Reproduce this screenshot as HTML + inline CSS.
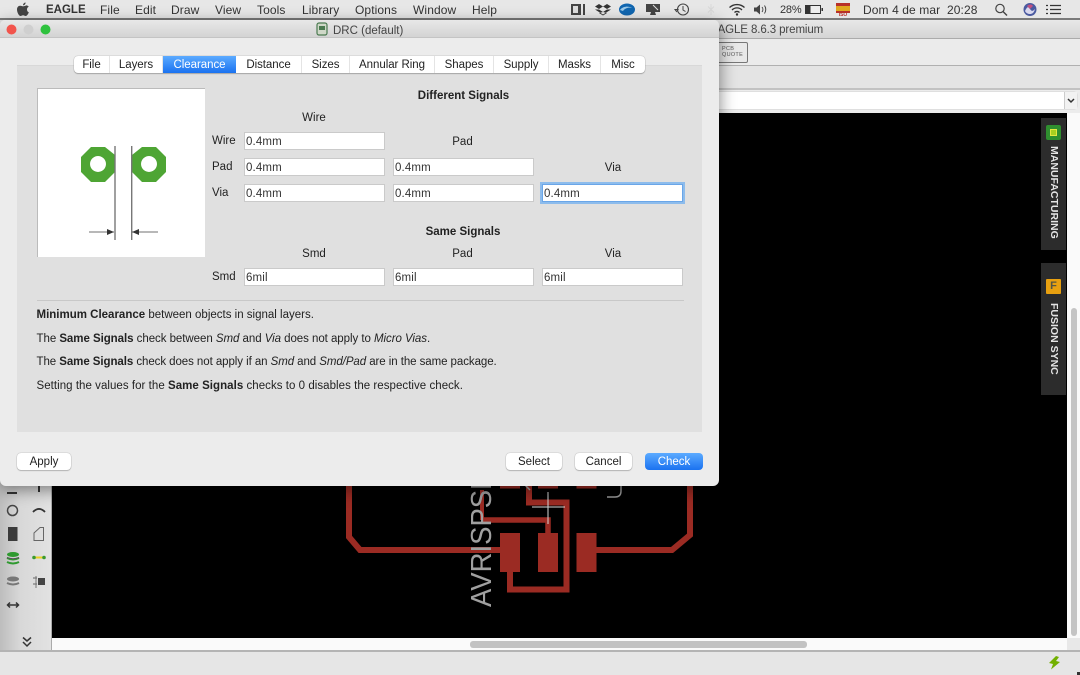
<!DOCTYPE html>
<html><head><meta charset="utf-8"><style>
html,body{margin:0;padding:0;background:#e6e6e6}
#p{position:relative;width:1080px;height:675px;overflow:hidden;font-family:"Liberation Sans",sans-serif;color:#222;background:#e6e6e6;filter:blur(.3px)}
#p div,#p svg{position:absolute}
.t{white-space:nowrap;font-size:11.5px;line-height:16px;height:16px;letter-spacing:0}
.m{font-size:12px;color:#333;top:3px;line-height:15px;height:15px;white-space:nowrap;letter-spacing:.1px}
.c{transform:translateX(-50%)}
.f{background:#fff;border:1px solid #cacaca;box-sizing:border-box;height:18px;font-size:11.5px;line-height:18px;padding-left:1px;letter-spacing:.15px;color:#333;white-space:nowrap}
.b{background:#fff;border-radius:4px;box-shadow:0 0 1px #888,0 1px 1px #bbb;height:17px;font-size:11.5px;line-height:19px;text-align:center;top:453px;color:#222}
.tab{top:56px;height:17px;line-height:19px;font-size:11.5px;text-align:center;border-right:1px solid #e4e4e4;box-sizing:border-box;letter-spacing:-.05px;color:#222}
</style></head><body><div id="p">

<!-- menu bar -->
<div style="left:0;top:0;width:1080px;height:19px;background:#e7e7e7"></div>
<div style="left:0;top:18px;width:1080px;height:2px;background:#7a7a7a"></div>
<svg style="left:16px;top:2px" width="14" height="15" viewBox="0 0 14 15"><path d="M10 3.6c-1.2 0-1.9.7-2.900.7S5.300 3.600 4 3.700C2.300 3.800 1 5.200 1 7.500c0 3 2 6.500 3.500 6.500 1 0 1.500-.7 2.600-.7s1.500.7 2.600.7c1.400 0 2.600-2.200 3.100-3.700-2.300-1-2.500-4.600-.1-5.600-.6-.9-1.600-1.400-2.700-1.300zM7 3.300C7 1.900 8.200.6 9.600.5c.1 1.500-1.200 2.900-2.600 2.800z" fill="#444"/></svg>
<div class="m" style="left:46px;font-weight:bold;font-size:11.500px;letter-spacing:0">EAGLE</div>
<div class="m" style="left:100px">File</div>
<div class="m" style="left:135px">Edit</div>
<div class="m" style="left:171px">Draw</div>
<div class="m" style="left:215px">View</div>
<div class="m" style="left:257px">Tools</div>
<div class="m" style="left:302px">Library</div>
<div class="m" style="left:355px">Options</div>
<div class="m" style="left:413px">Window</div>
<div class="m" style="left:472px">Help</div>

<svg style="left:560px;top:0" width="520" height="19" viewBox="560 0 520 19">
 <rect x="571" y="4" width="10" height="11" fill="#444"/><rect x="573" y="6" width="5" height="7" fill="#ddd"/><rect x="583" y="4" width="2" height="11" fill="#444"/>
 <path d="M599 4l4 2.500-4 2.500-4-2.500zM607 4l4 2.500-4 2.500-4-2.500zM599 9.500l4 2.500 4-2.500 4 0-8 5-8-5zM599 13l4 2.500 4-2.500-4-1z" fill="#333"/>
 <ellipse cx="627" cy="9.500" rx="8" ry="6" fill="#1166b0"/><path d="M620 10c3-4 9-4 12-2-3-1-7 0-9 3z" fill="#9cc9e8"/>
 <rect x="646" y="4" width="14" height="8" fill="#444"/><path d="M651 12h4l1 3h-6z" fill="#444"/><path d="M653 5l5 5" stroke="#ddd" stroke-width="1"/>
 <circle cx="683" cy="9.500" r="5.500" fill="none" stroke="#444" stroke-width="1.100"/><path d="M683 6v4l2.500 1.500M675 9.500h3l-1.500 2z" fill="none" stroke="#444" stroke-width="1"/>
 <path d="M711 4v11M708 6.500l6 6M708 12.500l6-6" stroke="#d8d8d8" stroke-width="1" fill="none"/>
 <path d="M729.500 7.500a11 11 0 0 1 15 0M732 10a7 7 0 0 1 10 0M734.500 12.500a3.500 3.500 0 0 1 5 0" fill="none" stroke="#333" stroke-width="1.300"/><circle cx="737" cy="14.500" r="1.200" fill="#333"/>
 <path d="M754 7.500h2.500l3.500-3v10l-3.500-3H754z" fill="#444"/><path d="M762 7a4 4 0 0 1 0 5M764.500 5.500a7 7 0 0 1 0 8" fill="none" stroke="#444" stroke-width="1"/>
 <rect x="805.500" y="5.500" width="15" height="8" fill="#eee" stroke="#333" stroke-width="1"/><rect x="806" y="6" width="4.500" height="7" fill="#333"/><rect x="821.500" y="8" width="1.500" height="3" fill="#333"/>
 <rect x="836" y="3" width="14" height="3" fill="#b8312a"/><rect x="836" y="6" width="14" height="5" fill="#e0a820"/><rect x="836" y="11" width="14" height="2" fill="#b8312a"/>
 <circle cx="1000" cy="8.500" r="4.200" fill="none" stroke="#444" stroke-width="1.200"/><path d="M1003 11.500l4 4" stroke="#444" stroke-width="1.400"/>
 <circle cx="1030" cy="9.500" r="6.500" fill="#4a5aa0"/><path d="M1025 11c2-4 3-5 5-2s3 2 5 0c-1 4-3 5-5 5s-4-1-5-3z" fill="#d8d8ee"/><path d="M1027 6c2-2 5-2 6 0l-3 3z" fill="#c05080"/>
 <path d="M1050 5.500h11M1050 9.500h11M1050 13.500h11" stroke="#333" stroke-width="1.300"/><path d="M1046 5.500h2M1046 9.500h2M1046 13.500h2" stroke="#333" stroke-width="1.300"/>
</svg>
<div class="m" style="left:780px;font-size:11px;letter-spacing:-.2px">28%</div>
<div style="left:836px;top:12px;width:14px;font-size:5px;line-height:6px;text-align:center;color:#b8312a;font-weight:bold">ISO</div>
<div class="m" style="left:863px">Dom 4 de mar</div>
<div class="m" style="left:947px">20:28</div>

<!-- main window -->
<div style="left:700px;top:20px;width:380px;height:18px;background:linear-gradient(#e8e8e8,#d4d4d4)"></div>
<div class="t" style="left:710px;top:22px;color:#444;letter-spacing:-.1px">EAGLE 8.6.3 premium</div>
<div style="left:700px;top:38px;width:380px;height:1px;background:#ababab"></div>
<div style="left:700px;top:39px;width:380px;height:26px;background:#ebebeb"></div>
<div style="left:700px;top:65px;width:380px;height:1px;background:#b0b0b0"></div>
<div style="left:700px;top:66px;width:380px;height:22px;background:#e4e4e4"></div>
<div style="left:700px;top:88px;width:380px;height:2px;background:#c2c2c2"></div>
<div style="left:700px;top:90px;width:380px;height:23px;background:#ececec"></div>
<div style="left:700px;top:92px;width:377px;height:17px;background:#fff;border-radius:3px;box-shadow:0 0 1px #999"></div>
<div style="left:1064px;top:92px;width:13px;height:17px;background:#f2f2f2;border-left:1px solid #ccc;box-sizing:border-box"></div>
<svg style="left:1066px;top:97px" width="10" height="7"><path d="M2 2l3 3 3-3" fill="none" stroke="#333" stroke-width="1.500"/></svg>
<div style="left:700px;top:42px;width:46px;height:19px;border:1px solid #777;border-radius:2px;background:#e8e8e8"></div>
<div style="left:722px;top:46px;font-size:5.500px;line-height:6px;color:#555;letter-spacing:.3px;white-space:nowrap">PCB<br>QUOTE</div>

<!-- canvas -->
<div style="left:0;top:113px;width:1067px;height:525px;background:#000"></div>
<div style="left:1067px;top:113px;width:13px;height:525px;background:#fafafa"></div>
<div style="left:1071px;top:308px;width:6px;height:328px;background:#c4c4c4;border-radius:3px"></div>
<div style="left:52px;top:638px;width:1015px;height:12px;background:#fafafa"></div>
<div style="left:1067px;top:638px;width:13px;height:12px;background:#e8e8e8"></div>
<div style="left:470px;top:641px;width:337px;height:7px;background:#c2c2c2;border-radius:3px"></div>
<div style="left:0;top:650px;width:1080px;height:2px;background:#b4b4b4"></div>
<div style="left:0;top:652px;width:1080px;height:23px;background:#e6e6e6"></div>
<svg style="left:1046px;top:654px" width="16" height="17" viewBox="1046 654 16 17"><path d="M1056 656L1049 663L1053 664L1051 669.500L1060 662L1056 661L1059 657Z" fill="#72b000"/></svg>
<div style="left:1077px;top:672px;width:3px;height:3px;background:#333"></div>

<!-- PCB -->
<svg style="left:52px;top:113px" width="1015" height="525" viewBox="52 113 1015 525">
 <g fill="none" stroke="#9b2b23" stroke-width="6">
  <path d="M349 480V537L360 550H505"/>
  <path d="M590 550H672L690 535V480"/>
  <path d="M510 570V589.500H566.500V502.500H529V480"/>
  <path d="M548 535V520H483" stroke-width="5.500"/>
  <path d="M482 520V490" stroke-width="4"/>
 </g>
 <g fill="#9b2b23">
  <rect x="500" y="533" width="20" height="39"/><rect x="538" y="533" width="20" height="39"/><rect x="576.500" y="533" width="20" height="39"/>
  <rect x="500" y="470" width="20" height="18.500"/><rect x="538" y="470" width="20" height="18.500"/><rect x="576.500" y="470" width="20" height="18.500"/>
 </g>
 <path d="M532 507H565M548 492V524" stroke="#d8d8d8" stroke-width="1" fill="none"/>
 <text transform="translate(491,607) rotate(-90)" font-family="Liberation Sans" font-size="29" fill="#a0a0a0" textLength="140" lengthAdjust="spacingAndGlyphs">AVRISPSM</text>
 <path d="M607 497H615Q621 497 621 491V470" fill="none" stroke="#999" stroke-width="1.500"/>
 <path d="M520 480L530 490" stroke="#aaa" stroke-width="1.500"/>
</svg>

<!-- right side panels -->
<div style="left:1041px;top:118px;width:25px;height:132px;background:#2c2c2c"></div>
<div style="left:1041px;top:263px;width:25px;height:132px;background:#2c2c2c"></div>
<div style="left:1046px;top:125px;width:15px;height:15px;background:#2f8f2f;border-radius:2px"></div>
<div style="left:1050px;top:129px;width:7px;height:7px;background:#a8d020;border:1px solid #e4e840;box-sizing:border-box"></div>
<div style="left:1046px;top:279px;width:15px;height:15px;background:#e8a010;border-radius:1px;font-size:11px;font-weight:bold;line-height:15px;text-align:center;color:#554"><span>F</span></div>
<div style="left:1047px;top:146px;width:13px;height:94px;writing-mode:vertical-rl;font-size:10.500px;line-height:13px;font-weight:bold;color:#e4e4e4;white-space:nowrap">MANUFACTURING</div>
<div style="left:1047px;top:303px;width:13px;height:72px;writing-mode:vertical-rl;font-size:10.500px;line-height:13px;font-weight:bold;color:#e4e4e4;white-space:nowrap">FUSION SYNC</div>

<!-- left toolbar -->
<div style="left:0;top:480px;width:52px;height:170px;background:linear-gradient(90deg,#bdbdbd,#d8d8d8 40%,#e2e2e2);border-right:1px solid #aaa;box-sizing:border-box"></div>
<svg style="left:0;top:480px" width="52" height="170" viewBox="0 480 52 170">
 <path d="M7 493H17" stroke="#333" stroke-width="2"/><path d="M39 486V492" stroke="#333" stroke-width="2"/>
 <circle cx="12.500" cy="510.500" r="5" fill="none" stroke="#444" stroke-width="1.500"/>
 <path d="M33 512Q39 506 45 512" fill="none" stroke="#333" stroke-width="1.800"/>
 <rect x="8" y="527" width="9.500" height="14" fill="#3a3a3a"/>
 <path d="M34 540.500V533L40 527.500H43.500V540.500Z" fill="none" stroke="#666" stroke-width="1"/>
 <ellipse cx="13" cy="554.500" rx="6" ry="2.500" fill="#2f9a30"/><path d="M7 558Q13 561 19 558M7 562Q13 565 19 562" fill="none" stroke="#2f9a30" stroke-width="2"/><path d="M7 557.500Q13 560 19 557.500" fill="none" stroke="#555" stroke-width="1"/>
 <path d="M33 557.500H45" stroke="#e8d020" stroke-width="2"/><circle cx="34" cy="557.500" r="1.800" fill="#3a9a30"/><circle cx="44" cy="557.500" r="1.800" fill="#3a9a30"/>
 <ellipse cx="13" cy="579" rx="6" ry="2.500" fill="#777"/><path d="M7 583Q13 586 19 583" fill="none" stroke="#777" stroke-width="2"/>
 <path d="M33 578H37M33 584H37" stroke="#666" stroke-width="1"/><rect x="38" y="578" width="7" height="7" fill="#444"/><path d="M36 576V588" stroke="#777" stroke-width="1"/>
 <path d="M8 605H18M10 602.500L7.500 605L10 607.500M16 602.500L18.500 605L16 607.500" fill="none" stroke="#333" stroke-width="1.500"/>
 <path d="M23 637.500L27 641L31 637.500M23 642L27 646L31 642" fill="none" stroke="#333" stroke-width="1.500"/>
</svg>

<!-- dialog -->
<div style="left:0;top:20px;width:719px;height:466px;background:#ececec;border-radius:5px 5px 6px 6px;box-shadow:1px 4px 16px rgba(0,0,0,.45)"></div>
<div style="left:0;top:20px;width:719px;height:18px;background:linear-gradient(#e8e8e8,#d3d3d3);border-radius:5px 5px 0 0;border-bottom:1px solid #c4c4c4;box-sizing:border-box"></div>
<svg style="left:0;top:20px" width="60" height="18"><circle cx="11.500" cy="9.500" r="5" fill="#f2544c"/><circle cx="28.500" cy="9.500" r="5" fill="#cfcfcf"/><circle cx="45.500" cy="9.500" r="5" fill="#2fc23e"/></svg>
<svg style="left:316px;top:22px" width="13" height="15"><rect x="1" y="1" width="10" height="12" rx="2" fill="#cfd8c8" stroke="#4a7a50" stroke-width="1.200"/><rect x="3" y="4" width="6" height="4" fill="#4a7a50"/></svg>
<div class="t" style="left:333px;top:23px;color:#444">DRC (default)</div>

<!-- panel -->
<div style="left:17px;top:65px;width:685px;height:367px;background:#e0e0e0;box-shadow:inset 0 1px 0 #d8d8d8"></div>
<div style="left:74px;top:56px;width:571px;height:17px;background:#fff;border-radius:4px;box-shadow:0 0 1px #888,0 1px 1px #aaa"></div>
<div class="tab" style="left:74px;width:36px">File</div>
<div class="tab" style="left:110px;width:53px">Layers</div>
<div class="tab" style="left:163px;width:73px;background:linear-gradient(#5cabff,#1a72f0);color:#fff;border:0">Clearance</div>
<div class="tab" style="left:236px;width:66px">Distance</div>
<div class="tab" style="left:302px;width:48px">Sizes</div>
<div class="tab" style="left:350px;width:85px">Annular Ring</div>
<div class="tab" style="left:435px;width:59px">Shapes</div>
<div class="tab" style="left:494px;width:55px">Supply</div>
<div class="tab" style="left:549px;width:52px">Masks</div>
<div class="tab" style="left:601px;width:44px;border:0">Misc</div>

<!-- image -->
<div style="left:37px;top:88px;width:168px;height:169px;background:#fff;box-shadow:inset 1px 1px 0 #bbb"></div>
<svg style="left:37px;top:88px" width="168" height="169" viewBox="37 88 168 169">
 <path fill-rule="evenodd" fill="#4ea534" d="M91 147H105L115 155V172L105 182H91L81 172V157ZM98 156a8 8 0 1 0 .01 0Z"/>
 <path fill-rule="evenodd" fill="#4ea534" d="M142 147H156L166 157V172L156 182H142L132 172V155ZM149 156a8 8 0 1 0 .01 0Z"/>
 <path d="M115 146V240M131.700 146V240" stroke="#777" stroke-width="1.400" fill="none"/>
 <path d="M89 232H114M132 232H158" stroke="#444" stroke-width=".8" fill="none"/>
 <path d="M114 232L107 229V235ZM132 232L139 229V235Z" fill="#333"/>
</svg>

<!-- labels -->
<div class="t c" style="left:463.500px;top:88px;font-weight:bold">Different Signals</div>
<div class="t c" style="left:314px;top:110px">Wire</div>
<div class="t c" style="left:462.500px;top:134px">Pad</div>
<div class="t c" style="left:613px;top:160px">Via</div>
<div class="t" style="left:212px;top:133px">Wire</div>
<div class="t" style="left:212px;top:159px">Pad</div>
<div class="t" style="left:212px;top:185px">Via</div>
<div class="f" style="left:244px;top:132px;width:141px">0.4mm</div>
<div class="f" style="left:244px;top:158px;width:141px">0.4mm</div>
<div class="f" style="left:393px;top:158px;width:141px">0.4mm</div>
<div class="f" style="left:244px;top:184px;width:141px">0.4mm</div>
<div class="f" style="left:393px;top:184px;width:141px">0.4mm</div>
<div class="f" style="left:542px;top:184px;width:141px;border:1px solid #6aa6e8;box-shadow:0 0 0 2px #8dbcec">0.4mm</div>
<div class="t c" style="left:463px;top:224px;font-weight:bold">Same Signals</div>
<div class="t c" style="left:314px;top:246px">Smd</div>
<div class="t c" style="left:462.500px;top:246px">Pad</div>
<div class="t c" style="left:613px;top:246px">Via</div>
<div class="t" style="left:212px;top:269px">Smd</div>
<div class="f" style="left:244px;top:268px;width:141px">6mil</div>
<div class="f" style="left:393px;top:268px;width:141px">6mil</div>
<div class="f" style="left:542px;top:268px;width:141px">6mil</div>

<div style="left:37px;top:300px;width:647px;height:1px;background:#c8c8c8"></div>
<div class="t" style="left:36.500px;top:307px"><b>Minimum Clearance</b> between objects in signal layers.</div>
<div class="t" style="left:36.500px;top:331px;letter-spacing:-.05px">The <b>Same Signals</b> check between <i>Smd</i> and <i>Via</i> does not apply to <i>Micro Vias</i>.</div>
<div class="t" style="left:36.500px;top:354px;letter-spacing:-.07px">The <b>Same Signals</b> check does not apply if an <i>Smd</i> and <i>Smd/Pad</i> are in the same package.</div>
<div class="t" style="left:36.500px;top:378px;letter-spacing:.04px">Setting the values for the <b>Same Signals</b> checks to 0 disables the respective check.</div>

<!-- buttons -->
<div class="b" style="left:17px;width:54px">Apply</div>
<div class="b" style="left:506px;width:56px">Select</div>
<div class="b" style="left:575px;width:57px">Cancel</div>
<div class="b" style="left:645px;width:58px;background:linear-gradient(#5cabff,#1a72f0);color:#fff;box-shadow:none">Check</div>

</div></body></html>
